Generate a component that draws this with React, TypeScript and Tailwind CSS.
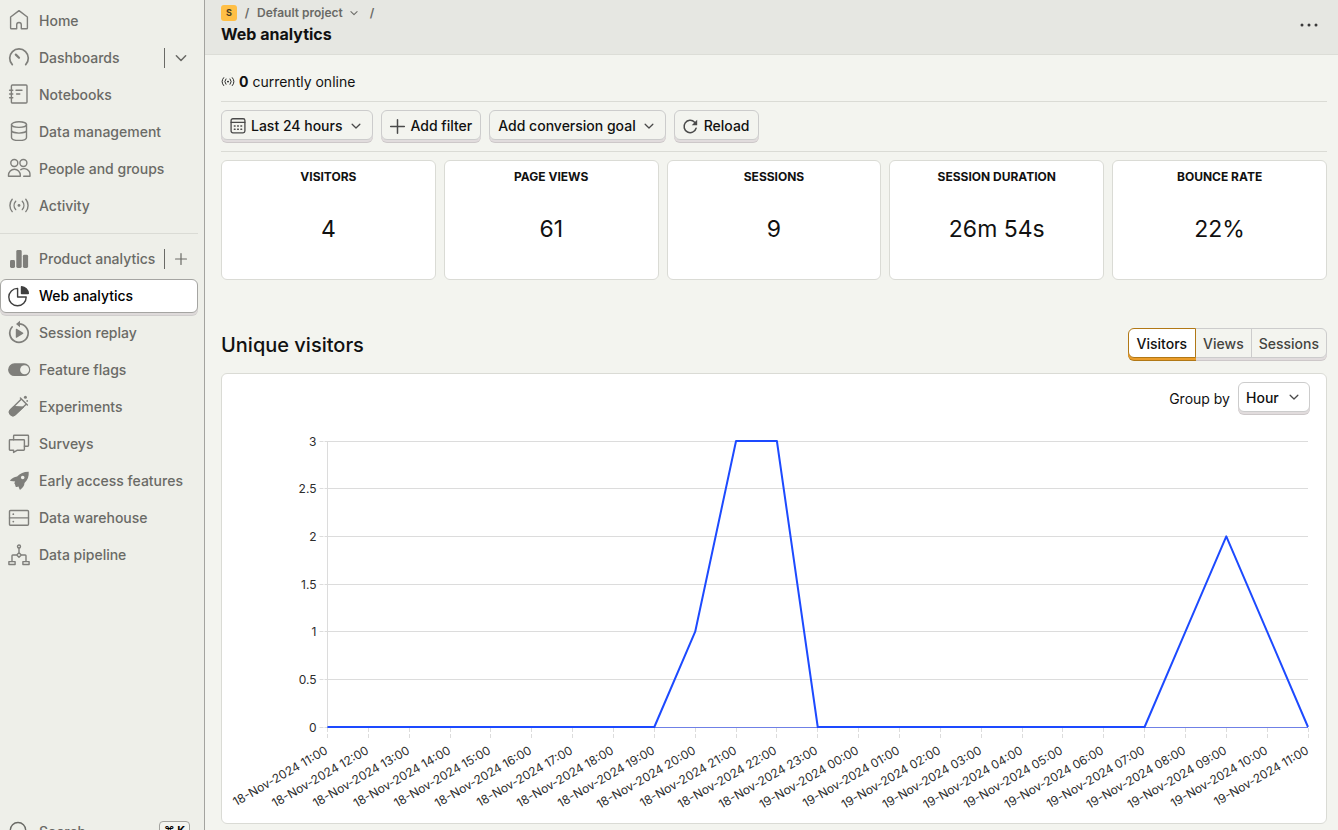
import { useLayoutEffect, useRef, useState, type ReactNode } from 'react'
import clsx from 'clsx'

const ICONS: Record<string, ReactNode> = {
  home: <path d="M11 .6 2.6 7v10.9c0 .5.4.9.9.9h5.2v-4a2.3 2.3 0 0 1 4.6 0v4h5.2c.5 0 .9-.4.9-.9V7z" />,
  dashboard: (
    <>
      <path strokeWidth="1.7" d="M4.3 17.6a9.3 9.3 0 1 1 13.4 0" />
      <path strokeWidth="2.2" d="m7.8 7.6 3.2 3.2" />
    </>
  ),
  notebook: (
    <>
      <rect x="3.4" y="1" width="15.6" height="18" rx="1" />
      <path d="M1.6 6.2h3.2M1.6 10h3.2M1.6 13.8h3.2M8 6.2h6M8.6 10h3.2" />
    </>
  ),
  database: (
    <>
      <ellipse cx="11" cy="3.6" rx="7.5" ry="2.8" />
      <path d="M3.5 3.6v12.8c0 1.7 3.3 3 7.5 3s7.5-1.3 7.5-3V3.6M3.5 9.2c0 1.6 3.3 2.9 7.5 2.9s7.5-1.3 7.5-2.9" />
    </>
  ),
  people: (
    <>
      <circle cx="6.3" cy="5" r="3.5" />
      <circle cx="15.4" cy="5" r="3.5" />
      <path d="M.5 18.3v-1.2a5.9 5.9 0 0 1 11.8 0v1.2zM12.8 11.7a5.9 5.9 0 0 1 9.2 5.2v1.4h-6.3" />
    </>
  ),
  activity: (
    <>
      <circle cx="11" cy="10.4" r="1.4" fill="currentColor" stroke="none" />
      <path d="M7.7 6.2a6.4 6.4 0 0 0 0 8.4M14.3 6.2a6.4 6.4 0 0 1 0 8.4M4.2 4.2a9.6 9.6 0 0 0 0 12.4M17.8 4.2a9.6 9.6 0 0 1 0 12.4" />
    </>
  ),
  bars: (
    <g fill="currentColor" stroke="none">
      <rect x="2" y="12" width="5" height="8" rx="1.4" />
      <rect x="8.3" y="2" width="5.4" height="18" rx="1.4" />
      <rect x="14.9" y="6.8" width="5.2" height="13.2" rx="1.4" />
    </g>
  ),
  pie: (
    <>
      <path d="M9.6 3.4V12h8.6a8.7 8.7 0 1 1-8.6-8.6z" />
      <path
        fill="currentColor"
        stroke="none"
        d="M12.8 1.8c0-.5.4-.9.9-.8a8 8 0 0 1 7.3 7.3c.1.5-.3.9-.8.9h-6.600a.8.8 0 0 1-.8-.8z"
      />
    </>
  ),
  replay: (
    <>
      <path strokeWidth="1.700" d="M11 1.900a9.200 9.200 0 1 1-6.900 3.100" />
      <path
        fill="currentColor"
        stroke="none"
        d="M8 2 12-1.200v6.400zM7.800 7.300c0-.5.5-.7.9-.5l6.400 4c.4.2.4.7 0 .9l-6.400 4c-.4.2-.9 0-.9-.5z"
      />
    </>
  ),
  toggle: (
    <>
      <rect x=".8" y="5" width="20.8" height="11.4" rx="5.7" fill="currentColor" />
      <circle cx="16.6" cy="10.7" r="4.5" fill="#eeefe9" stroke="none" />
    </>
  ),
  flask: (
    <>
      <path d="m12.4 2 7 7M13.4 3 2.6 13.8a3.3 3.3 0 0 0 4.7 4.7L18.4 8" />
      <path fill="currentColor" d="m6 10.6 9.3.5-8 7.4a3.3 3.3 0 0 1-4.7-4.7z" />
      <circle cx="17.4" cy="1.3" r="1.5" fill="currentColor" stroke="none" />
      <circle cx="19.2" cy="4.9" r=".9" fill="currentColor" stroke="none" />
    </>
  ),
  surveys: (
    <>
      <path d="M5.6 6.8V3c0-.4.3-.7.7-.7h13.5c.4 0 .7.3.7.7v9.6c0 .4-.3.7-.7.7h-3.4" />
      <path d="M2.1 6.8h13.6c.4 0 .7.3.7.7v9c0 .4-.3.7-.7.7H9.4l-3.8 2.2v-2.2H2.1a.7.7 0 0 1-.7-.7v-9c0-.4.3-.7.7-.7z" />
    </>
  ),
  rocket: (
    <path
      fill="currentColor"
      stroke="none"
      fillRule="evenodd"
      d="M20.7 1.7c.3 4.6-.8 8.1-4.2 11.4-.2 2.7-1.4 4.6-4 6.5-.4.3-.9.2-1-.3l-1-2.9-1.6.6c-.6.2-1.1-.1-1.3-.6L6.9 14l-.7-.7 1-1.900-4.400-.3c-.6 0-.8-.6-.4-1 1.8-2 3.7-3.300 6.700-3.600C12.200 3 16 1.600 20.700 1.700zM14.700 5.700a1.800 1.800 0 1 0 0 3.600 1.800 1.800 0 0 0 0-3.600z"
    />
  ),
  server: (
    <>
      <rect x="1.5" y="3.5" width="19" height="14.8" rx="1" />
      <path d="M1.5 10.9h19" />
      <circle cx="5.3" cy="7.2" r=".9" fill="currentColor" stroke="none" />
      <circle cx="5.3" cy="14.6" r=".9" fill="currentColor" stroke="none" />
    </>
  ),
  pipeline: (
    <>
      <circle cx="11" cy="2.5" r="1.5" />
      <path d="M11 4v4.7M9 11H4.800c-.5 0-.8.3-.8.8v5.700M13 11h4.200c.5 0 .8.3.8.8v5.700M11 8.700l2.300 2.300-2.300 2.300L8.700 11zM.9 17.600h6.200v2.900H.9zM14.900 17.600h6.200v2.900h-6.200z" />
    </>
  ),
  search: (
    <>
      <circle cx="10" cy="9.2" r="7.7" />
      <path d="m15.6 14.7 5 5" />
    </>
  ),
  calendar: (
    <>
      <rect x="1.5" y="1" width="19" height="19.5" rx="2.5" strokeWidth="1.8" />
      <path strokeWidth="1.8" d="M1.5 6h19" />
      <path strokeWidth="2" d="M10.500 11h1M15 11h1M6 15.500h1M10.500 15.500h1M15 15.500h1M6 11h1" />
    </>
  ),
  plus: <path strokeWidth="2.2" d="M11 1v20M1 11h20" />,
  reload: (
    <>
      <path strokeWidth="2.2" d="M19.2 13.5A9 9 0 1 1 17 4.700l2 2" />
      <path fill="currentColor" stroke="none" d="M20.8 1v8h-8z" />
    </>
  ),
  chevron: <path strokeWidth="2.8" d="m2.500 7 8.500 8.500L19.500 7" />,
}

function Icon({ name, className = 'size-[22px]' }: { name: string; className?: string }) {
  return (
    <svg
      viewBox="0 0 22 22"
      className={clsx('shrink-0 overflow-visible', className)}
      fill="none"
      stroke="currentColor"
      strokeWidth="1.4"
      strokeLinecap="round"
      strokeLinejoin="round"
      aria-hidden="true"
    >
      {ICONS[name]}
    </svg>
  )
}

type NavItem = { icon: string; label: string; active?: boolean; side?: { icon: string; label: string } }

const MAIN_NAV: NavItem[] = [
  { icon: 'home', label: 'Home' },
  { icon: 'dashboard', label: 'Dashboards', side: { icon: 'chevron', label: 'Open dashboards list' } },
  { icon: 'notebook', label: 'Notebooks' },
  { icon: 'database', label: 'Data management' },
  { icon: 'people', label: 'People and groups' },
  { icon: 'activity', label: 'Activity' },
]

const PRODUCT_NAV: NavItem[] = [
  { icon: 'bars', label: 'Product analytics', side: { icon: 'plus', label: 'New insight' } },
  { icon: 'pie', label: 'Web analytics', active: true },
  { icon: 'replay', label: 'Session replay' },
  { icon: 'toggle', label: 'Feature flags' },
  { icon: 'flask', label: 'Experiments' },
  { icon: 'surveys', label: 'Surveys' },
  { icon: 'rocket', label: 'Early access features' },
  { icon: 'server', label: 'Data warehouse' },
  { icon: 'pipeline', label: 'Data pipeline' },
]

function NavList({ items }: { items: NavItem[] }) {
  return (
    <ul className="flex flex-col gap-[3px]">
      {items.map((item) => (
        <li
          key={item.label}
          className={clsx(
            'flex h-[34px] items-center rounded-md border',
            item.active
              ? 'border-[#a5a5a2] bg-white text-black shadow-[0_2px_0_#dedada,0_3px_0_#d0cecd]'
              : 'border-transparent text-[#6a6a66]'
          )}
        >
          <a href="#" className="flex h-full min-w-0 grow items-center gap-[9px] pl-[7px] whitespace-nowrap">
            <span className={clsx('flex', item.active ? 'text-[#3f3f3f]' : 'text-[#7f7f7b]')}>
              <Icon name={item.icon} />
            </span>
            {item.label}
          </a>
          {item.side && (
            <button
              type="button"
              aria-label={item.side.label}
              className="flex h-5 w-[33px] items-center justify-center border-l border-[#6a6a66]"
            >
              <Icon name={item.side.icon} className="size-3" />
            </button>
          )}
        </li>
      ))}
    </ul>
  )
}

function Sidebar() {
  return (
    <aside className="flex h-screen w-[205px] shrink-0 flex-col overflow-hidden border-r border-[#a3a39f] bg-[#eeefe9] pr-[6px] font-medium">
      <nav className="shrink-0 grow basis-[calc(100vh-15px)] pt-1">
        <NavList items={MAIN_NAV} />
        <hr className="mt-[10px] mb-2 border-[#dadbd5]" />
        <NavList items={PRODUCT_NAV} />
      </nav>
      <button type="button" className="flex h-[34px] shrink-0 items-center gap-[9px] px-2 text-[#6a6a66]">
        <Icon name="search" />
        Search
        <kbd className="ml-auto flex h-[22px] w-[31px] items-center justify-center rounded border border-[#a3a39f] bg-[#f3f4ef] pb-1 font-[inherit] text-[11px] leading-4 font-bold whitespace-nowrap text-black">
          ⌘ K
        </kbd>
      </button>
    </aside>
  )
}

const raised =
  'flex h-[30px] items-center rounded-md border border-[#cccccc] pt-0.5 font-medium whitespace-nowrap shadow-[0_2px_0_#e1dcdd,0_3px_0_#cdc8c9]'

const STATS = [
  { label: 'Visitors', value: '4' },
  { label: 'Page views', value: '61' },
  { label: 'Sessions', value: '9' },
  { label: 'Session duration', value: '26m 54s' },
  { label: 'Bounce rate', value: '22%' },
]

const VISITORS = [0, 0, 0, 0, 0, 0, 0, 0, 0, 1, 3, 3, 0, 0, 0, 0, 0, 0, 0, 0, 0, 1, 2, 1, 0]
const Y_TICKS = [0, 0.5, 1, 1.5, 2, 2.5, 3]

function hourLabel(i: number) {
  const hour = 11 + i
  return `${18 + Math.floor(hour / 24)}-Nov-2024 ${String(hour % 24).padStart(2, '0')}:00`
}

function LineChart() {
  const ref = useRef<HTMLDivElement>(null)
  const [width, setWidth] = useState(1104)

  useLayoutEffect(() => {
    const el = ref.current
    if (!el) return
    const measure = () => setWidth(el.clientWidth)
    measure()
    const observer = new ResizeObserver(measure)
    observer.observe(el)
    return () => observer.disconnect()
  }, [])

  const left = 105.5
  const right = width - 18
  const top = 21
  const bottom = 307
  const x = (i: number) => left + ((right - left) * i) / (VISITORS.length - 1)
  const y = (v: number) => bottom - ((bottom - top) * v) / 3

  return (
    <div ref={ref} className="w-full">
      <svg width={width} height={403} role="img" aria-label="Unique visitors by hour" className="block text-xs">
        {Y_TICKS.map((tick) => {
          const ty = Math.floor(y(tick)) + 0.5
          return (
            <g key={tick}>
              <path d={`M${left - 8} ${ty}h4M${left - 3} ${ty}H${right}`} stroke="#dcdcdc" />
              <text x={left - 11} y={ty + 4} textAnchor="end" fill="#2d2d2d">
                {tick}
              </text>
            </g>
          )
        })}
        <path d={`M${left} ${top}V${bottom}`} stroke="#dcdcdc" />
        {VISITORS.map((_, i) => {
          const tx = Math.floor(x(i)) + 0.5
          return (
            <g key={i}>
              <path d={`M${tx} ${bottom + 1}v4m0 2v4`} stroke="#dcdcdc" />
              <text
                x={tx + 1}
                y={bottom + 26}
                textAnchor="end"
                fill="#2d2d2d"
                transform={`rotate(-30 ${tx + 1} ${bottom + 26})`}
              >
                {hourLabel(i)}
              </text>
            </g>
          )
        })}
        <path d={`M${left} ${bottom + 0.5}H${right}`} stroke="#6f80e6" />
        <polyline
          points={VISITORS.map((v, i) => `${x(i)},${y(v)}`).join(' ')}
          fill="none"
          stroke="#1d4aff"
          strokeWidth="2"
          strokeLinejoin="round"
        />
      </svg>
    </div>
  )
}

function Header() {
  return (
    <header className="flex h-[55px] items-center justify-between border-b border-[#dcddd7] bg-[#e6e7e2] pr-5 pb-[5px] pl-4">
      <div>
        <nav aria-label="Breadcrumb" className="flex h-4 items-center text-[12px] font-semibold text-[#6a6a66]">
          <a
            href="#"
            className="flex size-4 items-center justify-center rounded-[3px] bg-[#ffbf45] text-[9px] font-bold text-[#4a3d20]"
          >
            S
          </a>
          <span className="w-5 text-center">/</span>
          <button type="button" className="flex items-center gap-[7px]">
            Default project
            <Icon name="chevron" className="size-2" />
          </button>
          <span className="pl-3">/</span>
        </nav>
        <h1 className="mt-[3px] text-base leading-5 font-bold text-[#111]">Web analytics</h1>
      </div>
      <button type="button" aria-label="More options" className="text-[#3a3a3a]">
        <svg width="18" height="6" viewBox="0 0 18 6" fill="currentColor" aria-hidden="true">
          <circle cx="2" cy="3" r="1.5" />
          <circle cx="9" cy="3" r="1.5" />
          <circle cx="16" cy="3" r="1.5" />
        </svg>
      </button>
    </header>
  )
}

function Toolbar() {
  return (
    <div className="flex gap-2 border-y border-[#dadbd5] pt-2 pb-[11px]">
      <button type="button" className={clsx(raised, 'gap-1 px-2')}>
        <Icon name="calendar" className="mr-px size-4 text-[#4a4a4a]" />
        Last 24 hours
        <Icon name="chevron" className="mr-[3px] ml-1 size-[10px] text-[#4a4a4a]" />
      </button>
      <button type="button" className={clsx(raised, 'gap-[6px] px-2')}>
        <Icon name="plus" className="size-[15px] text-[#4a4a4a]" />
        Add filter
      </button>
      <button type="button" className={clsx(raised, 'gap-1 px-2')}>
        Add conversion goal
        <Icon name="chevron" className="mr-[3px] ml-1 size-[10px] text-[#4a4a4a]" />
      </button>
      <button type="button" className={clsx(raised, 'gap-[6px] px-2')}>
        <Icon name="reload" className="size-[15px] text-[#4a4a4a]" />
        Reload
      </button>
    </div>
  )
}

export default function App() {
  const [tab, setTab] = useState('Visitors')

  return (
    <div className="flex h-screen overflow-hidden bg-[#f3f4ef] font-['Inter','Liberation_Sans',sans-serif] text-[14px] leading-5 text-[#111]">
      <Sidebar />
      <div className="min-w-0 grow overflow-hidden">
        <Header />
        <main className="pr-[11px] pl-4">
          <p className="flex h-[46px] items-center gap-1 pt-2">
            <Icon name="activity" className="size-[14px]" />
            <span>
              <strong className="font-bold">0</strong> currently online
            </span>
          </p>
          <Toolbar />

          <section aria-label="Overview" className="mt-2 grid grid-cols-5 gap-2">
            {STATS.map((s) => (
              <div
                key={s.label}
                className="flex h-[120px] flex-col items-center rounded-md border border-[#dadbd5] bg-white pt-2"
              >
                <h2 className="text-[12px] leading-4 font-bold uppercase">{s.label}</h2>
                <p className="mt-7 text-[23px] leading-8">{s.value}</p>
              </div>
            ))}
          </section>

          <div className="mt-12 flex h-[33px] items-center justify-between">
            <h2 className="text-[20px] leading-7 font-medium">Unique visitors</h2>
            <div role="group" aria-label="Metric" className="flex h-[33px] font-medium">
              {['Visitors', 'Views', 'Sessions'].map((t) => (
                <button
                  key={t}
                  type="button"
                  aria-pressed={t === tab}
                  onClick={() => setTab(t)}
                  className={clsx(
                    'h-[30px] border px-[7px] pt-0.5 not-first:-ml-px first:rounded-l-md first:px-2 last:rounded-r-md',
                    t === tab
                      ? 'z-10 border-[#b17816] bg-white text-[#111] shadow-[0_2px_0_#eb9d2a,0_3px_0_#b17816]'
                      : 'border-[#cccccc] text-[#44443f] shadow-[0_2px_0_#e1dcdd,0_3px_0_#cdc8c9]'
                  )}
                >
                  {t}
                </button>
              ))}
            </div>
          </div>

          <section aria-label="Trend" className="mt-3 rounded-md border border-[#dadbd5] bg-white">
            <div className="flex h-[46px] items-start justify-end gap-2 pt-2 pr-4">
              <label htmlFor="interval" className="pt-[7px]">
                Group by
              </label>
              <div className="relative">
                <select id="interval" className={clsx(raised, 'w-[72px] appearance-none bg-white pl-[7px]')}>
                  <option>Hour</option>
                  <option>Day</option>
                  <option>Week</option>
                </select>
                <span className="pointer-events-none absolute top-2.5 right-[11px] text-[#4a4a4a]">
                  <Icon name="chevron" className="size-[10px]" />
                </span>
              </div>
            </div>
            <LineChart />
          </section>
        </main>
      </div>
    </div>
  )
}
